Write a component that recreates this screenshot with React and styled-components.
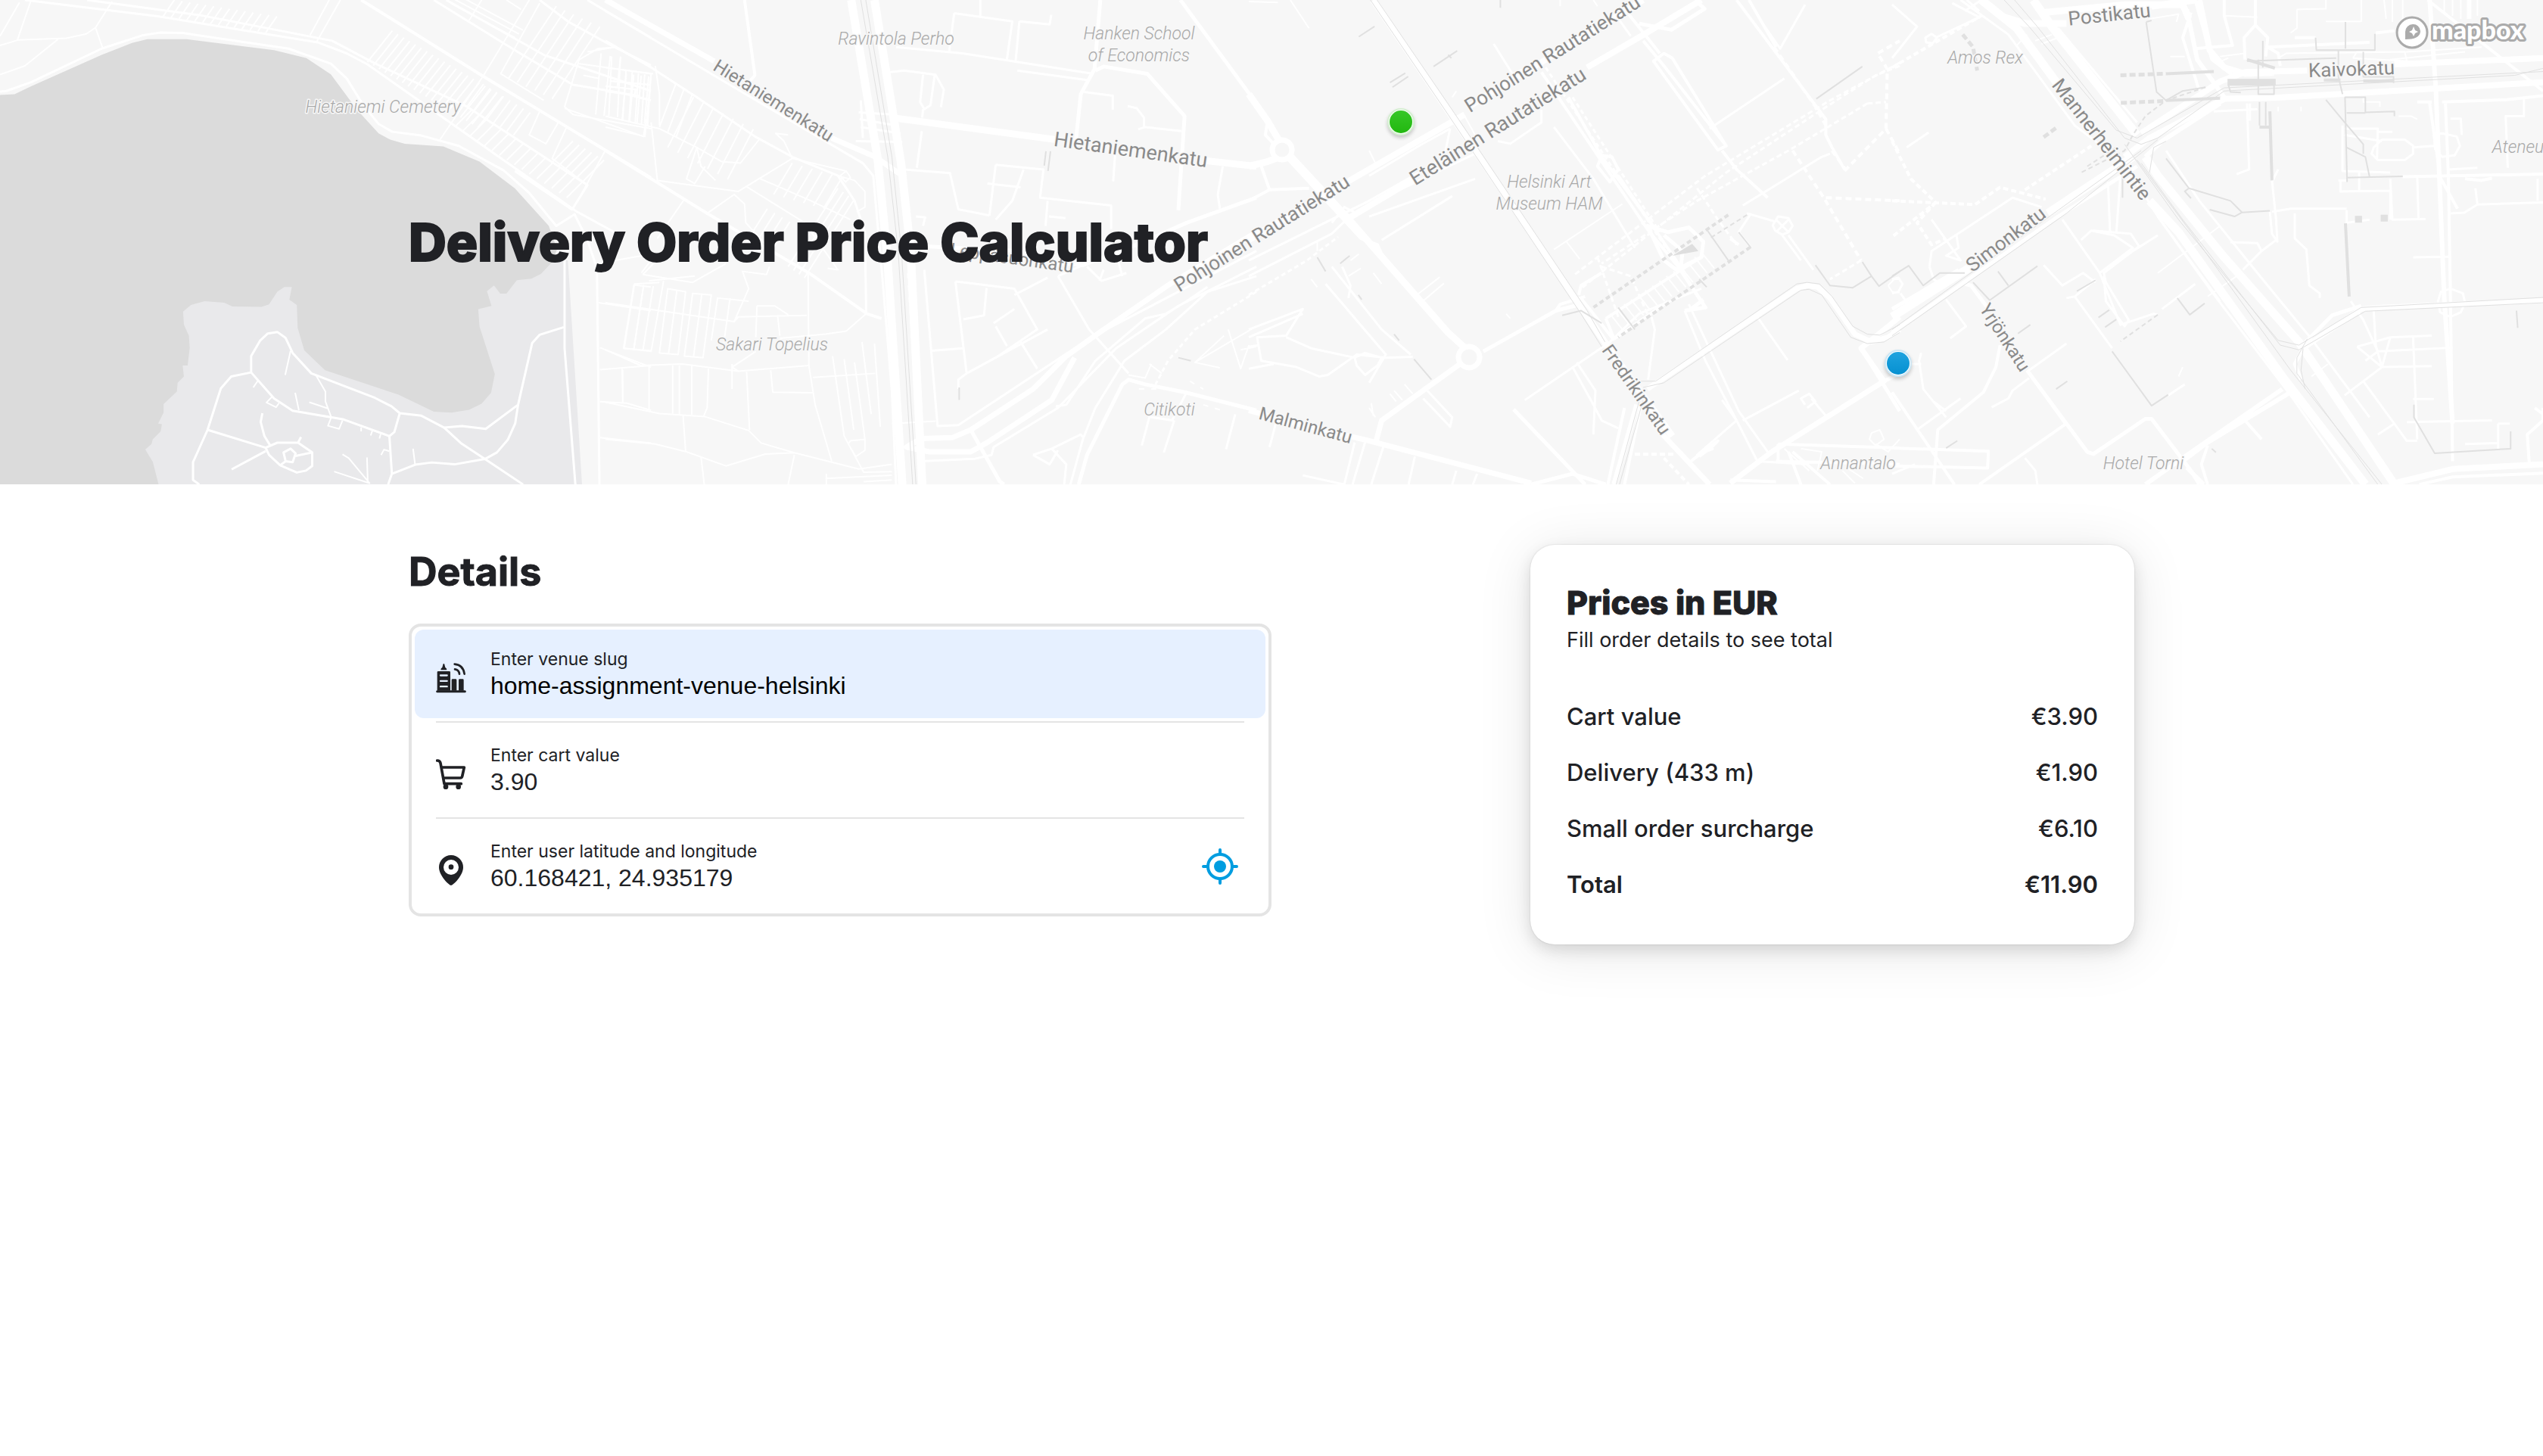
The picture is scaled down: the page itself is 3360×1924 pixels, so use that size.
import React, { useState } from "react";
import styled, { createGlobalStyle } from "styled-components";

const ink = "#202125";
const line = "#e4e4e4";
const brand = "#009de0";
const display = '"Inter", "Open Sans", sans-serif';
const body = '"Inter", "Roboto", sans-serif';

const GlobalStyle = createGlobalStyle`
  *, *::before, *::after { box-sizing: border-box; }
  body { margin: 0; background: #fff; color: ${ink}; font-family: ${body}; }
  h1, h2, dl, dd { margin: 0; }
`;

/* ---------- Map ---------- */

/* Parallel strokes from one start line, stepped along (dx, dy). */
const hatch = (x1, y1, x2, y2, dx, dy, n) =>
  Array.from({ length: n }, (_, i) =>
    `M${x1 + dx * i} ${y1 + dy * i}L${x2 + dx * i} ${y2 + dy * i}`).join("");

const tiles = [
  {
    x: 0,
    park: "M1330 830L1368 830L1402 1544L340 1544L340 900L1150 900Z",
    water:
      "M0 303L35 300L75 275L245 175L318 137L355 125L450 125L660 160L738 185L797 237L860 350L912 425L940 445L975 458L1068 467L1155 515L1240 600L1322 720L1342 795L1328 838L1303 873L1280 888L1245 893L1220 936L1205 936L1190 910L1173 928L1184 975L1152 985L1155 1040L1192 1192L1183 1252L1160 1287L1130 1306L1088 1315L1045 1312L960 1258L783 1180L733 1117L717 1045L715 972L697 955L703 915L685 915L668 930L648 970L630 978L560 977L540 965L493 960L460 972L441 993L443 1035L455 1070L457 1108L452 1165L440 1165L443 1200L428 1220L426 1248L394 1288L394 1315L381 1350L390 1352L387 1375L368 1400L365 1415L350 1433L368 1472L382 1544L0 1544Z",
    roads: [
      [2, "M0 292L15 290L75 262L245 155L345 112L385 104L440 105L695 155L797 203L835 250L875 335L912 395L945 420L1015 432L1105 465L1213 543L1275 615L1340 720L1384 683L1415 765L1438 855L1444 1544"],
      [2, "M60 0L380 52L765 135L835 170L885 205L1390 675L1480 740M210 0L480 48L800 130L900 200L1125 340L1415 590L1378 668L1240 545"],
      [3, "M870 0L955 70L1160 240L1460 480L1568 567"],
      [2, "M1045 0L1240 160L1380 270L1500 297L1568 320M1075 0L1310 175L1568 290M1300 0L1370 70L1480 150L1568 208M1415 0L1568 120"],
      [4, "M1465 0L1568 82"],
      [1, "M0 145L45 127L160 122L208 108L230 88L247 152M140 125L60 210L0 238M75 0L42 127M0 115L47 8M230 88L270 5"],
      [1, "M1275 0L1165 240L1060 445M1300 10L1206 235L1310 320M1160 0L1130 65M1220 0L1255 30"],
      [1, hatch(420, 0, 393, 52, 19, 4, 14) + "M793 0L747 112M820 0L762 135"],
      [1, hatch(945, 98, 885, 198, 14, 11, 20)],
      [1, hatch(1135, 352, 1095, 405, 18, 15, 16)],
      [1, hatch(1165, 268, 1125, 340, 16, 13, 8) + hatch(1380, 450, 1328, 520, 15, 12, 6)],
      [1, hatch(1340, 20, 1225, 250, 21, 13, 6) + hatch(1085, 10, 1240, 120, 10, -12, 3)],
      [1, "M1390 202L1568 235M1415 165L1483 150L1440 155L1395 190L1360 340L1380 365L1568 410M1360 345L1550 435L1557 380M1380 270L1540 305M1448 170L1435 365M1470 178L1455 370M1495 180L1487 275M1405 240L1443 250M1470 258L1568 270M1465 275L1530 285L1528 303"],
      [1, hatch(1508, 225, 1500, 385, 15, 4, 5)],
      [1, "M1300 355L1275 430L1315 458L1345 390M1365 405L1330 505L1415 590M1458 480L1400 620"],
      [1, "M1440 840L1568 810M1442 965L1568 990M1445 1108L1568 1170M1445 1178L1568 1165M1445 1280L1510 1285L1568 1308M1445 1395L1568 1412M1500 1178V1283M1527 908L1502 1110L1568 1118M1527 908L1568 915M1550 912L1527 1112M1545 870L1568 830"],
      [2, "M1360 830V1110L1386 1544"],
      [2, "M1358 1043L1300 1067L1282 1093L1248 1290L1170 1367L1113 1358L1070 1363L1015 1325L963 1317L950 1377L938 1390L828 1337L705 1309L660 1270L605 1187L605 1135L627 1085L645 1063L668 1058L688 1077L705 1125L750 1190L903 1268L943 1295L963 1317"],
      [2, "M605 1187L557 1200L532 1238L500 1370L465 1473L465 1530L480 1544M938 1390L944 1510L935 1544M944 1510L1000 1481L1040 1474L1095 1480L1168 1463L1197 1442L1223 1402L1241 1350L1248 1290M1070 1363L1110 1412L1168 1463L1260 1544"],
      [2, "M500 1370L640 1427L668 1411H718L752 1442V1485L737 1500L715 1506L675 1483L648 1450L640 1427M640 1438L558 1496M683 1442L700 1430L712 1445L705 1473L688 1470ZM712 1453L752 1442M675 1483L688 1470M718 1411L725 1393M650 1418L637 1390L628 1345L632 1317"],
      [1, "M700 1118L687 1195M762 1198L784 1248V1280L798 1330L790 1357L817 1367L825 1340M745 1282L790 1302M711 1252L720 1308M622 1212L610 1235M655 1265L642 1283L665 1298L672 1285M870 1362V1375M897 1372L893 1388M917 1383L914 1398M825 1448L840 1460L890 1540L805 1503M884 1458L886 1540M995 1430L1000 1481M938 1438L925 1433L918 1450"],
    ],
  },
  {
    x: 800,
    roads: [
      [7, "M0 0L262 195M545 440L650 500L715 560"],
      [2, "M0 35L280 255L620 520L645 560L668 900L690 1250L700 1544M0 130L110 215L220 310L360 435L450 500L560 560L600 640L625 740L628 1000"],
      [3, "M335 0L360 240L340 270M0 480L245 680L490 870L630 1000L665 1015"],
      [11, "M592 0L655 500L678 800L715 1544"],
      [11, "M648 0L712 520L735 800L763 1544"],
      [9, "M690 375L1085 445M1445 512L1568 530"],
      [5, "M1385 0L1568 330"],
      [2, "M700 150L860 170L1175 235M992 225L1160 255M840 42L980 68L967 190M840 42L828 165M903 0V50M997 68L1070 78L1074 47M997 68L988 195M685 230L720 225L795 238L815 285L808 342M765 238L758 325L768 348L783 335L793 240"],
      [4, "M1192 0L1178 220L1145 300L1133 450M1180 225L1200 212L1305 235L1395 370L1380 670"],
      [2, "M1153 293L1222 305V350M1258 338L1280 345L1297 375V405M1283 412L1300 405L1388 418M615 320L620 440M610 358L690 365M612 380L700 400M615 405L710 425M603 450L715 452M720 540L830 552L850 667L925 687M762 418L750 535M940 525L1055 540L1047 630L1218 655V730M940 525L925 687M1007 540L980 640L940 700M920 585L1000 597M1065 640L1060 720M1230 450L1223 578M748 690L770 693L765 720M1068 690L1108 695M1487 530L1475 620L1480 665M765 348L763 375"],
      [7, "M1568 740L1360 905L1190 1060L1110 1135L1030 1240L880 1370L835 1395L760 1398L725 1425L780 1440H880L920 1410L1075 1275L1130 1140"],
      [4, "M1568 630L1400 710L1280 780L1150 845L1090 840L1000 800L770 785"],
      [2, "M1568 800L1170 1075L850 1355L800 1358L768 860M1568 850L1380 975L1230 1110L1090 1300L935 1425L930 1450L890 1462L760 1470M1568 880L1450 930L1350 1050L1250 1150L1180 1300L1150 1400L1120 1544M1450 915L1400 960L1350 1000L1300 1015L1180 1150L1110 1290L1085 1295"],
      [4, "M1568 1308L1395 1250L1300 1225L1260 1210L1245 1225L1160 1450L1140 1544M880 1370L950 1535L960 1544"],
      [2, "M843 897L985 920L1040 1050L940 1140M843 897L870 1190L1065 1050M870 1190L850 1210V1240M785 1118L862 1110M985 940L1065 885M935 1030L985 985M940 1040L967 1103M1000 1090L1040 1175M1090 880L1165 1050L1260 1190M1090 880L1150 845M918 918L912 1005L862 1018M1030 1450L1075 1430L1110 1480L1105 1544M1030 1450L1070 1480L1090 1435M1075 1430L1145 1385L1152 1395M1310 1330L1292 1420M1370 1340L1345 1442M1400 1250L1365 1340L1308 1328M1517 1320L1495 1432M1160 850L1195 895L1255 870M1200 860L1190 895M1235 830L1245 880"],
      [2, "M1568 930L1420 1050L1355 1150L1325 1225", "6 4"],
      [1, "M1568 1040L1420 1155L1490 1070M1420 1155L1480 1172M1500 1050L1530 1175L1550 1100M1530 1115L1568 1105M1310 1160L1340 1190M1260 1195L1300 1205L1315 1160"],
      [1, hatch(170, 265, 130, 405, 20, 16, 3) + hatch(212, 310, 150, 470, 24, 17, 7) + "M0 370L130 410L220 470L280 515L325 520L370 445M110 390L125 575L320 610L450 505L580 545M220 470L195 570L215 585L240 530M220 470L230 530L265 575M0 405L95 435L110 235M120 210L130 300V400M450 505L430 450L410 425L440 430"],
      [1, "M0 215L115 235M10 258L105 270M0 275L75 285L70 305M0 292L80 305" + hatch(15, 180, 8, 370, 21, 3, 2) + hatch(50, 235, 40, 385, 18, 3, 4)],
      [1, "M370 568L495 640L590 700M340 595L480 710L560 860L535 855M245 680L310 620L335 650L338 710L400 800M190 635L125 760" + hatch(450, 520, 405, 620, 24, 9, 6) + hatch(560, 600, 440, 850, 13, 12, 4) + hatch(390, 665, 340, 770, 18, 14, 4)],
      [1, "M130 900L70 905L45 1110L110 1120L140 895M90 875L210 900L290 840M90 875L130 820M105 895L215 880M0 965L310 1025L345 920L330 865L388 875L395 850M0 1115L85 1165L185 1160L320 1183L490 1165L488 870M310 1025L320 1010L485 1005M345 960L270 950L255 1085M150 920L130 1125L175 1130L193 930ZM210 935L190 1135L235 1140L255 940ZM300 950L285 1095M172 925L152 1127M92 908L68 1115M115 912L90 1118M232 937L212 1138M365 975H408L440 1003M365 975L362 1075M415 1010L420 1070M420 1078L530 1065L580 1055L628 1000"],
      [1, "M0 1282L130 1318L240 1328L345 1372L375 1412L455 1443L610 1495L690 1480M0 1400L120 1415L195 1440L290 1485L385 1447L455 1443M40 1175L42 1282M105 1170V1308M162 1165V1318M178 1165V1320M208 1165V1322M248 1175L245 1300L237 1325M340 1185L347 1370M187 1325L193 1437M230 1455L238 1544M455 1450L440 1544M398 1180L403 1250L500 1252M305 1160V1240M320 1183L305 1170L362 1120"],
      [1, "M490 1165L505 1290L545 1470M547 1135L575 1390L622 1505L690 1503M575 1145L598 1370M600 1155L625 1400M618 1090L640 1320M648 1095L662 1360M500 1203L650 1190M590 1405L625 1400L625 1435L603 1455L585 1415ZM530 1525L690 1515M622 1535L690 1530M690 1350L795 1342M532 1510V1544M560 560L600 575L625 610V660L605 675M565 560L580 545L590 565L578 580Z"],
      [1, "M728 870L750 1340M1285 1240H1345M1408 1215L1440 1240M1440 1290L1490 1310", "7 9"],
    ],
    rails: [
      [1, "M615 0L680 500L705 800L740 1544M627 0L690 500L713 800L748 1544"],
      [2, "M1061 482L1057 528M1072 482L1066 545M852 1235V1275M1380 1140L1410 1150"],
    ],
  },
  {
    x: 1650,
    roads: [
      [9, "M0 300L45 385L85 475L235 690L480 1060L530 1120M0 530L45 515L75 500"],
      [8, "M0 760L250 570L520 365M0 765L210 605M530 340L950 0"],
      [8, "M235 700L400 570M815 215L945 115L1090 0"],
      [5, "M1075 0L1098 28L1018 95L940 75"],
      [3, "M0 640L50 605L145 600M50 605L30 530M45 385L40 430L110 530L270 760L310 780L320 810"],
      [2, "M0 830L290 640L470 505L485 410M0 880L200 745L235 700L340 620L545 490M290 690L545 570M200 710L230 660L260 680M320 765L490 625M485 410L410 465L290 560M600 450L630 458L705 390V350M880 40L920 115M590 140L635 235L700 200"],
      [2, "M0 940L140 830L215 755", "6 4"],
      [7, "M535 1135L320 1340L305 1415M0 1308L100 1345L290 1405L680 1540"],
      [4, "M565 1120L740 990L800 970"],
      [2, "M255 1410L230 1544M280 1410L250 1544M325 1420L295 1544M130 1515L230 1544M400 1455L385 1544M420 1270L485 1360L490 1330L430 1245M65 1350L50 1425M500 1500L490 1544M550 1510L540 1544"],
      [2, "M185 905L330 1130L290 1220M0 1050L130 985L90 1070L20 1075L30 1150L115 1170L170 1200L190 1195L260 1130L330 1140L395 1137M0 1105L25 1100M0 1175L60 1160M225 850L245 910L240 950M200 850L320 1050L390 1130M255 1140L280 1125L320 1140L310 1165L280 1195L260 1165ZM90 1075L150 1110L255 1140M0 1075L35 1055L130 1000"],
      [1, "M165 765V800M150 890L165 915M265 810L245 830M270 855L240 880M300 870L320 905M400 945L460 883M415 965L470 903M340 1255L355 1280M350 1245L370 1275M375 1225L395 1255M290 1300L305 1330M295 1285L300 1325M620 1000L630 1015M765 770L797 825M735 795L900 650"],
      [4, "M638 1305L800 1530L810 1544M680 1544L780 1510L860 1544"],
      [2, "M735 405L830 570L930 790M665 1275L870 1090L940 1000L1090 920M780 1170L830 1290L850 1340L890 1365M790 1155L835 1245L830 1385M970 1010L978 1050L962 1210M1225 1010L1298 1148M1060 970L1180 1310L1250 1440M1050 990L1100 1150L1175 1340L1225 1470L1345 1480M1140 1275L1175 1340L1080 1450L1120 1430M1190 1340L1325 1245M1340 1290L1330 1270L1350 1255L1365 1280L1345 1300M1355 1270L1390 1325"],
      [3, "M705 230L960 730L1040 860M770 310L850 500L985 740M840 530L850 495L875 500L890 540L870 580ZM890 560L1050 870"],
      [2, "M715 215L1010 800M780 310L990 740", "6 4"],
      [3, "M950 130L1000 210L1150 465L1130 478L975 195L1000 170L1020 185L1150 465M1140 480L1175 540L1250 630M915 45L990 170"],
      [3, "M1175 0L1390 380V430L1405 470L1435 540M1205 0L1270 150"],
      [3, "M1265 150L1365 340L1390 400M1435 545L1535 410L1538 220L1515 170L1568 130M1405 480L1440 545M1535 410L1568 490M1390 630L1568 640M1310 480L1385 630L1475 830", "8 5"],
      [2, "M1568 200L1400 320L1100 560L780 880M1568 210L1510 240L1380 350L1150 550L800 920M1490 330L1535 325M1490 330L1300 480L1080 640L850 840M1080 600L1130 700L1175 780M840 820L890 1010M850 850L920 880L960 1000M1475 830L1400 890", "7 4"],
      [2, "M1340 15L1280 155L1230 60M1110 410L1290 250M1210 680L1180 740L1210 790M1190 655L1380 500L1400 490M1200 680L1265 705M1262 718L1275 690L1300 695L1310 720L1300 740L1285 748L1268 735ZM1270 700L1300 740M1300 700L1270 740M1285 750L1330 830M1300 750L1360 860"],
      [4, "M960 720L1010 740L1060 725L1095 770L1090 820L1030 860L1000 830L975 760ZM1000 750L1045 800L1040 860L1100 980L1050 990M1060 990L1095 955"],
      [3, "M1095 815L860 1015M1160 760L1180 780M795 940L800 910L850 870M800 950L830 1000L880 1085M740 990L750 970L810 945M860 1015L880 1080L1010 960"],
      [1, hatch(870, 1000, 900, 1050, 17, -15, 14)],
      [7, "M960 1240L1320 920L1345 910L1370 915L1400 950L1460 1065L1500 1090L1540 1075L1568 1050M1568 1010L1475 1110L1530 1215L1260 1440L1160 1540"],
      [4, "M1475 1110L1568 1310M1530 1215L1568 1190"],
      [7, "M990 1375L1110 1544M935 1290L880 1544"],
      [3, "M905 1300L865 1544M945 1290L905 1544M1040 1440L1110 1544M1065 1470L1130 1405L1115 1425L1085 1455M1275 1415L1568 1428M1270 1470L1568 1480M1275 1415V1465M1300 1440L1330 1544M1310 1440L1400 1544M1160 1530L1270 1535"],
      [3, "M930 1448L1030 1448M1000 1460L1060 1544", "7 4"],
      [1, "M1290 1430L1350 1500M1330 1430L1380 1440L1370 1500M1500 1380L1520 1370L1530 1400L1510 1420L1495 1400ZM1510 1415L1540 1440L1568 1400M1430 1500L1460 1540M1440 1490L1480 1525M1540 910L1555 890L1568 890M1540 910L1550 930L1568 933M1568 865L1520 910M490 310L500 290M520 370L545 430M290 480L305 520M750 0V20M830 0L840 20M100 0L145 90M0 5L70 8"],
      [9, "M300 0L870 1115L1020 1390"],
    ],
    rails: [
      [1, "M293 0L480 365L800 1000L850 1105M309 0L495 360L815 990L858 1090"],
      [1, "M930 1215L980 1215L1320 905L1345 900L1375 905L1405 945L1455 1040L1490 1065L1520 1068L1568 1035M950 1235L1000 1220L1330 925L1350 922L1380 940L1450 1075L1490 1095L1530 1090L1568 1060M940 1280L885 1544M950 1275L893 1544"],
      [2, "M265 117L303 84M445 212L502 162M480 175L488 185M340 263L377 233M346 278L384 244M165 820L185 865M243 815L220 840M398 1145L440 1210M350 1065L362 1085M264 940L272 955M606 0V25M1367 315L1478 212M755 1005L800 990L850 1030M1365 845L1400 910L1455 917L1500 880L1478 835M1500 880L1518 912L1568 865M1105 735L1155 830M1180 740L1210 790M890 980L930 1050M1085 890L1103 915"],
      [4, "M1155 685L830 980M1208 788L890 1075", "6 4"],
      [2, "M1200 685L1110 760", "6 4"],
    ],
    blocks: "M1020 815L1068 777L1083 800Z",
  },
  {
    x: 2500,
    roads: [
      [11, "M215 0L300 90L400 270M620 640L690 740L940 1200L1140 1544"],
      [11, "M340 0L385 85L590 430M610 500L640 560L800 820L980 1090L1210 1544"],
      [9, "M260 50L320 75H420M365 40L560 15L700 15L715 60M625 20L730 0"],
      [8, "M740 0L765 160L800 215L850 235L920 232M600 425L790 260L850 230L1000 225M1210 205L1568 185M560 500L620 440L800 315L920 312L1568 262"],
      [6, "M710 30L735 190L800 310M610 500L650 450L790 330"],
      [11, "M0 1010L190 850M375 680L580 500"],
      [5, "M0 1060L400 690L590 530M0 985L160 860"],
      [2, "M165 0L280 110L440 400L560 520L640 690L770 930L960 1260L1110 1544M400 90L590 390M180 0L210 35M215 0L175 35"],
      [2, "M660 480L740 640L880 870L1010 1080L1150 1330M640 690L790 960"],
      [3, "M730 0L770 190L820 240M720 40L700 120L740 290M800 0V50L820 145L730 155M875 0V80L905 120L900 180M875 80L848 120L850 190M905 150L1150 135M905 150L930 170L935 210M970 120L1020 120M1165 105L1210 98"],
      [6, "M1295 0L1310 290L1330 950L1350 1350M1390 0V60"],
      [3, "M1290 0L1568 290M1265 325H1300M1325 325L1480 318L1568 305M1295 330L1320 560M1333 330L1340 560L1345 950L1350 1470M1230 563L1568 555M1320 565L1362 665M1380 570L1420 575L1445 568"],
      [2, "M1305 430L1325 425L1360 435L1368 465L1355 495L1325 500L1308 475ZM1160 470L1180 445H1235L1255 465V490L1235 510L1170 510L1155 490ZM1255 470L1305 465M1085 400V545L1200 550M1090 410H1170L1168 510M1090 430L1180 450M1080 575V610L1200 608V700M1075 575H1095M1125 550V610M1200 570L1205 700L1285 698M1265 565L1268 695M1095 665H960L915 675M1095 670V710L1150 700M1205 420H1170M1340 540L1410 535M1345 378L1370 378L1372 430M1405 600L1410 652L1378 678L1345 680M1410 652L1568 645M1555 570V640M1483 535L1478 370H1522V315"],
      [2, "M910 675L915 745L928 770L925 700L915 575M815 772L880 775L890 800L925 765M845 860L890 800M970 680V760L998 795L1005 910L1030 935V950M855 330L860 540L830 555M862 330V385M930 540L915 580M775 355L880 348"],
      [2, "M1315 960L1322 930L1345 920L1375 935L1380 965L1370 995L1345 1010L1320 995ZM1345 920V880M1120 1105L1200 1075L1300 1070M1120 1105L1180 1170L1300 1167M1170 1120L1350 1108M1200 1075L1180 1170M1255 1075L1265 1400M1090 1260L1180 1170M1135 1215L1240 1405H1265M1160 990L1165 1100L1180 1170M1105 960L1135 1020L1170 1120M1140 1150L1170 1120M1170 1385L1210 1350M1255 820L1340 818M1240 1345L1445 1340M1255 1272H1305M1380 1415L1460 1412M1460 1350L1488 1350M1460 1350V1430"],
      [7, "M990 1110L1130 985L1180 980L1568 958"],
      [4, "M985 1105L1060 1005L1130 975M990 1110L970 1160L985 1210"],
      [8, "M1210 1540L1350 1495L1568 1480"],
      [3, "M1270 1544L1350 1520L1568 1508M1568 1300V1340L1530 1385L1535 1480M1548 1300L1568 1320"],
      [5, "M175 905L190 910L235 990M325 1180L470 1440L485 1447L610 1335L625 1335L720 1500L740 1544"],
      [6, "M940 1240L700 1460L610 1544M960 1250L760 1410L690 1480M710 1490L750 1544"],
      [3, "M760 1420L745 1480L760 1544M850 1340L890 1400"],
      [3, "M420 1350L210 1544M420 1355L330 1190M260 1100L250 1170L220 1250L110 1370L100 1544M0 1250L150 1544M0 1428L232 1438L230 1492L0 1485"],
      [2, "M60 1370L165 1270M0 1510L55 1480M70 1125L65 1150L75 1240L130 1330M45 1160H70M100 1280L130 1310M330 1205L290 1245L280 1270L240 1298M420 1095L330 1180M90 850L95 800L290 630L360 660M90 850L100 890L120 910M130 955L178 1040L140 1078M0 890L15 885L25 905L15 930L0 935M20 935L45 980M95 700L165 830L130 815L160 790L155 750"],
      [2, "M410 700L500 870L550 1035L630 1000L640 1003M500 870L580 790L535 750L480 735L455 765M485 735L575 745L595 785L510 870L515 900L570 1020L560 1040L515 960L510 880M520 580L525 740M550 560L540 745M365 845L410 910L460 870L490 900M490 890L440 945L420 950M440 945L530 1110M640 750L520 850M730 905L650 985M705 1225L665 1260M35 470L88 422M320 1460L345 1500L350 1544"],
      [2, "M0 15L60 85L0 185M80 120L95 108L108 120L98 138L82 135ZM105 120L210 55L145 10"],
      [3, "M0 215L215 50M0 450L45 570L105 645L0 755M0 640L200 652L260 597L370 635M105 645L60 710L95 780L130 760M320 605L480 465", "7 4"],
      [1, "M975 30L1045 28V0M975 30V90L960 105M1045 68H1130V0M1185 0L1190 60M1205 0V70M1230 0V60M1330 0V40M1350 0V50M1370 0V60M1410 0V50M930 185L950 170L1240 165L1420 150M1110 185L1120 165H1235L1240 195L1110 185M1200 190L1380 165M790 180L850 170M785 200L810 185M800 50L880 55M620 60L690 45L685 70M670 180H705M345 130L385 110M360 140L400 120M325 110L300 145"],
      [1, "M900 345V360M930 340V355M985 340V355M1170 420V440M1220 370H1250L1265 380M1135 310V325H1175V340M790 720L640 870M830 880L760 945M700 1170L690 1200M1010 1200L1050 1160M560 580L580 560"],
    ],
    rails: [
      [1, "M270 0L330 85L540 415L590 440L800 280L1568 228M295 0L350 85L560 440L600 460L640 440L800 290L1500 240L1568 218M0 1050L400 670L600 480M0 1070L420 680L640 445M560 460L690 700L930 1085L980 1100L1130 980L1200 975L1568 948M600 520L700 700L935 1100L980 1115L1140 992L1568 965M620 550L630 470L660 450M1000 1080L975 1140V1190L1170 1544M990 1110L985 1180L995 1240M590 510L720 740L960 1180L1180 1544"],
      [2, "M612 70L637 293L660 320L700 290L755 278M612 70L625 65M660 505L715 600L815 640L843 677L910 672M765 668L825 690L843 677M715 600L705 610L720 632M555 560V630M1045 318L1090 390L1135 460V490M1095 470L1140 500L1150 563M1095 566L1230 562M1090 310H1140V358L1210 355V370M1095 360H1140M810 270L815 293L840 295M882 190V300H920V265M893 130V215M1020 120L1022 160H1163V108M1135 165V245H1208V265M1075 160V245L1085 300M855 195L1070 185"],
      [2, "M0 880L40 847L75 910L115 870H175M195 900L235 957L350 848M255 865L280 910M445 928L490 893M687 950L717 1003L753 967M303 1063L333 1035M497 1012L523 988M513 1043L540 1018M530 1120L625 1293L665 1258M395 1240L422 1215M130 1428L157 1405M1257 1290V1330L1307 1445L1490 1430V1375M1504 990L1507 1045M770 1430L780 1442M900 325V400M885 325V400M1092 70V155M1091 310L1096 580"],
      [4, "M660 235L775 228M660 320L790 313M910 355L915 575M1092 712L1101 945M855 190L922 217M885 405H908M1040 255H1080M1135 258H1208"],
      [9, "M808 262H924M1115 699H1132M1177 695H1194"],
      [5, "M550 240L660 235M551 328L655 322M170 110L195 150L205 225M365 437L398 405", "8 4"],
      [2, "M755 278L660 320L610 370L580 430L560 480L455 550M640 1003L550 1088M470 530L540 470", "6 4"],
    ],
  },
];

const streets = [
  ["Hietaniemenkatu", 1022, 133, 32, 24],
  ["Hietaniemenkatu", 1494, 198, 8, 27],
  ["Leppäsuonkatu", 1337, 341, 8, 24],
  ["Pohjoinen Rautatiekatu", 1667, 308, -32, 26],
  ["Pohjoinen Rautatiekatu", 2051, 71, -32, 26],
  ["Eteläinen Rautatiekatu", 1979, 167, -32, 27],
  ["Malminkatu", 1725, 562, 15, 24],
  ["Fredrikinkatu", 2162, 515, 55, 24],
  ["Simonkatu", 2650, 316, -37, 26],
  ["Yrjönkatu", 2649, 446, 57, 24],
  ["Mannerheimintie", 2777, 184, 52, 26],
  ["Postikatu", 2787, 19, -6, 26],
  ["Kaivokatu", 3107, 91, -2, 26],
];

const places = [
  ["Hietaniemi Cemetery", 506, 141],
  ["Ravintola Perho", 1184, 51],
  ["Hanken School", 1505, 44],
  ["of Economics", 1505, 73],
  ["Sakari Topelius", 1020, 455],
  ["Citikoti", 1545, 541],
  ["Helsinki Art", 2047, 240],
  ["Museum HAM", 2047, 269],
  ["Annantalo", 2455, 612],
  ["Hotel Torni", 2832, 612],
  ["Amos Rex", 2623, 76],
  ["Ateneum", 3337, 194],
];

const MapSvg = styled.svg`
  position: absolute;
  inset: 0;
  width: 100%;
  height: 100%;
  background: #f7f7f7;

  path { vector-effect: non-scaling-stroke; }
  .line { fill: none; stroke-linejoin: round; }
  text {
    font-family: "Roboto", "Liberation Sans", sans-serif;
    text-anchor: middle;
    dominant-baseline: central;
    paint-order: stroke;
    stroke: #f7f7f7;
    stroke-width: 3px;
    stroke-linejoin: round;
  }
  .street { fill: #8a8a8a; }
  .place { fill: #a9a9a9; font-size: 23px; font-style: italic; font-weight: 300; }
  .wordmark {
    font-family: "Lato", sans-serif;
    font-size: 34px;
    font-weight: 900;
    fill: #fff;
    stroke: #ababab;
    stroke-width: 6px;
    text-anchor: start;
    dominant-baseline: alphabetic;
  }
`;

function Lines({ items, color, extra = 0 }) {
  return items.map(([width, d, dash], i) => (
    <path
      key={i}
      className="line"
      d={d}
      stroke={color}
      strokeWidth={width < 5 ? width + extra : width}
      strokeDasharray={dash}
    />
  ));
}

function CityMap() {
  return (
    <MapSvg viewBox="0 0 3360 640" preserveAspectRatio="xMidYMid slice" role="img" aria-label="Map of central Helsinki">
      {tiles.map((tile) => (
        <g key={tile.x} transform={`translate(${tile.x}) scale(.5485 .4146)`}>
          {tile.park && <path d={tile.park} fill="#e9e9eb" />}
          {tile.water && <path d={tile.water} fill="#dbdbdb" />}
          <Lines items={tile.roads} color="#fff" extra={1} />
          {tile.rails && <Lines items={tile.rails} color="#e0e0e0" />}
          {tile.blocks && <path d={tile.blocks} fill="#dedede" />}
        </g>
      ))}
      <g fill="#f7f7f7" stroke="#fff" strokeWidth="7">
        <circle cx="1694" cy="198" r="13" />
        <circle cx="1941" cy="472" r="14" />
      </g>
      {streets.map(([name, x, y, angle, size]) => (
        <text key={name + x} className="street" fontSize={size} transform={`translate(${x} ${y}) rotate(${angle})`}>
          {name}
        </text>
      ))}
      {places.map(([name, x, y]) => (
        <text key={name} className="place" x={x} y={y}>{name}</text>
      ))}
      <circle cx="3187" cy="43" r="20" fill="#fff" stroke="#ababab" strokeWidth="3" />
      <path d="M3178 52V42A10 10 0 0 1 3188 32A9.500 9.500 0 0 1 3198 41C3198 49 3190 52 3178 52Z" fill="#ababab" />
      <path d="M3189 35L3191 40L3195 42L3191 44L3189 48L3187 44L3183 42L3187 40Z" fill="#fff" />
      <text className="wordmark" x="3213" y="52">mapbox</text>
    </MapSvg>
  );
}

const Hero = styled.header`
  position: relative;
  display: flex;
  align-items: center;
  min-height: 640px;
  overflow: hidden;
`;

const Pin = styled.span`
  position: absolute;
  left: ${(p) => p.$left};
  top: ${(p) => p.$top};
  width: 36px;
  height: 36px;
  transform: translate(-50%, -50%);
  border: 2px solid ${(p) => p.$ring};
  border-radius: 50%;
  background: linear-gradient(${(p) => p.$from}, ${(p) => p.$to}) content-box, #fff;
  padding: 1px;
  box-shadow: 0 3px 5px rgba(0, 0, 0, 0.2);
`;

const Container = styled.div`
  position: relative;
  width: 100%;
  max-width: 2376px;
  margin: 0 auto;
  padding: 0 48px;
`;

const PageTitle = styled.h1`
  font: 800 69px/88px ${display};
  -webkit-text-stroke: 2px ${ink};
`;

/* ---------- Form ---------- */

const Columns = styled(Container).attrs({ as: "main" })`
  display: flex;
  flex-wrap: wrap;
  justify-content: space-between;
  align-items: flex-start;
  gap: 48px;
  padding-top: 80px;
  padding-bottom: 80px;
`;

const Details = styled.section`
  flex: 0 1 50%;
  min-width: 560px;
`;

const SectionTitle = styled.h2`
  margin-bottom: 32px;
  font: 700 52px/72px ${display};
  -webkit-text-stroke: 1px ${ink};
`;

const Form = styled.form`
  border: 4px solid ${line};
  border-radius: 16px;
`;

const Row = styled.div`
  padding: 4px;

  & + &::before {
    content: "";
    display: block;
    height: 2px;
    margin: -4px 28px 4px;
    background: ${line};
  }
`;

const Field = styled.div`
  display: flex;
  align-items: center;
  gap: 32px;
  min-height: 117px;
  padding: 0 28px;
  border-radius: 12px;
  background: ${(p) => (p.$filled ? "#e6f0ff" : "transparent")};
`;

const FieldIcon = styled.span`
  display: flex;
  padding-top: 10px;
  svg { width: 40px; height: 40px; fill: ${ink}; stroke: ${ink}; }
`;

const FieldText = styled.div`
  flex: 1;
  min-width: 0;
`;

const Label = styled.label`
  display: block;
  font-size: 23px;
  line-height: 30px;
`;

const Input = styled.input`
  display: block;
  width: 100%;
  height: 40px;
  padding: 0;
  border: 0;
  outline: 0;
  background: transparent;
  color: ${(p) => (p.$filled ? "#000" : ink)};
  font: 32px/40px "Liberation Sans", Arial, sans-serif;
`;

const LocateButton = styled.button`
  display: flex;
  padding: 8px;
  border: 0;
  background: none;
  cursor: pointer;
  svg { width: 48px; height: 48px; fill: none; stroke: ${brand}; }
`;

const VenueIcon = () => (
  <svg viewBox="0 0 120 120" aria-hidden="true">
    <path stroke="none" fillRule="evenodd" d="M9 33H53Q57 33 57 37V110H5V37Q5 33 9 33ZM18 46A3 3 0 0 0 18 53H44A3 3 0 0 0 44 46ZM18 68A3 3 0 0 0 18 75H44A3 3 0 0 0 44 68ZM18 90A3 3 0 0 0 18 97H44A3 3 0 0 0 44 90Z" />
    <path stroke="none" d="M31 3Q34 3 34 7L37 18Q43 20 43 28H19Q19 20 25 18L28 7Q28 3 31 3ZM62 68Q62 64 66 64H78Q82 64 82 68V110H62ZM90 68Q90 64 94 64H106Q110 64 110 68V110H90Z" />
    <path strokeWidth="9" strokeLinecap="round" fill="none" d="M5 113H115" />
    <path strokeWidth="8" strokeLinecap="round" fill="none" d="M74 5Q108 8 113 44M75 25Q91 27 93 44" />
  </svg>
);

const CartIcon = () => (
  <svg viewBox="0 0 120 120" aria-hidden="true">
    <path strokeWidth="11" strokeLinecap="round" strokeLinejoin="round" fill="none" d="M5 6Q16 6 18 16L33 98H100M24 33H112L104 69Q102 75 96 75H30" />
    <circle cx="39" cy="110" r="10" stroke="none" />
    <circle cx="89" cy="110" r="10" stroke="none" />
  </svg>
);

const PinIcon = () => (
  <svg viewBox="0 0 120 120" aria-hidden="true">
    <path stroke="none" fillRule="evenodd" d="M60 120C53 120 12 82 12 48A48 48 0 0 1 108 48C108 82 67 120 60 120ZM60 18A30 30 0 0 0 60 78A30 30 0 0 0 60 18Z" />
    <circle cx="60" cy="47" r="10" stroke="none" />
  </svg>
);

const LocateIcon = () => (
  <svg viewBox="0 0 48 48" aria-hidden="true">
    <circle cx="24" cy="24" r="16" strokeWidth="4" />
    <path strokeWidth="4" strokeLinecap="round" d="M24 2V7M24 41V46M2 24H7M41 24H46" />
    <circle cx="24" cy="24" r="8" fill={brand} stroke="none" />
  </svg>
);

function TextField({ id, label, icon, initial, filled, action }) {
  const [value, setValue] = useState(initial);
  return (
    <Row>
      <Field $filled={filled}>
        <FieldIcon>{icon}</FieldIcon>
        <FieldText>
          <Label htmlFor={id}>{label}</Label>
          <Input id={id} $filled={filled} value={value} onChange={(e) => setValue(e.target.value)} />
        </FieldText>
        {action}
      </Field>
    </Row>
  );
}

/* ---------- Prices ---------- */

const Card = styled.section`
  flex: 0 1 35%;
  min-width: 480px;
  padding: 48px;
  border-radius: 32px;
  background: #fff;
  box-shadow: 0 0 2px rgba(0, 0, 0, 0.16), 0 8px 20px rgba(0, 0, 0, 0.12), 0 8px 72px rgba(0, 0, 0, 0.1);
`;

const CardTitle = styled.h2`
  font: 800 43px/56px ${display};
  -webkit-text-stroke: 1px ${ink};
`;

const CardNote = styled.div`
  font-size: 27px;
  line-height: 44px;
`;

const PriceList = styled.dl`
  display: grid;
  gap: 12px;
  margin-top: 48px;
`;

const PriceRow = styled.div`
  display: flex;
  justify-content: space-between;
  font-size: 31px;
  line-height: 62px;
  font-weight: ${(p) => (p.$total ? 600 : 500)};
`;

const prices = [
  ["Cart value", "€3.90"],
  ["Delivery (433 m)", "€1.90"],
  ["Small order surcharge", "€6.10"],
  ["Total", "€11.90"],
];

export default function App() {
  return (
    <>
      <GlobalStyle />
      <Hero>
        <CityMap />
        <Container>
          <PageTitle>Delivery Order Price Calculator</PageTitle>
        </Container>
        <Pin $left="55.1%" $top="25.2%" $from="#36c727" $to="#22b810" $ring="#d5f0d1" />
        <Pin $left="74.65%" $top="75%" $from="#1fa3df" $to="#0690d0" $ring="#cde7f5" />
      </Hero>
      <Columns>
        <Details>
          <SectionTitle>Details</SectionTitle>
          <Form onSubmit={(e) => e.preventDefault()}>
            <TextField id="venue" label="Enter venue slug" icon={<VenueIcon />} initial="home-assignment-venue-helsinki" filled />
            <TextField id="cart" label="Enter cart value" icon={<CartIcon />} initial="3.90" />
            <TextField
              id="coords"
              label="Enter user latitude and longitude"
              icon={<PinIcon />}
              initial="60.168421, 24.935179"
              action={<LocateButton type="button" aria-label="Use my location"><LocateIcon /></LocateButton>}
            />
          </Form>
        </Details>
        <Card>
          <CardTitle>Prices in EUR</CardTitle>
          <CardNote>Fill order details to see total</CardNote>
          <PriceList>
            {prices.map(([name, value]) => (
              <PriceRow key={name} $total={name === "Total"}>
                <dt>{name}</dt>
                <dd>{value}</dd>
              </PriceRow>
            ))}
          </PriceList>
        </Card>
      </Columns>
    </>
  );
}
